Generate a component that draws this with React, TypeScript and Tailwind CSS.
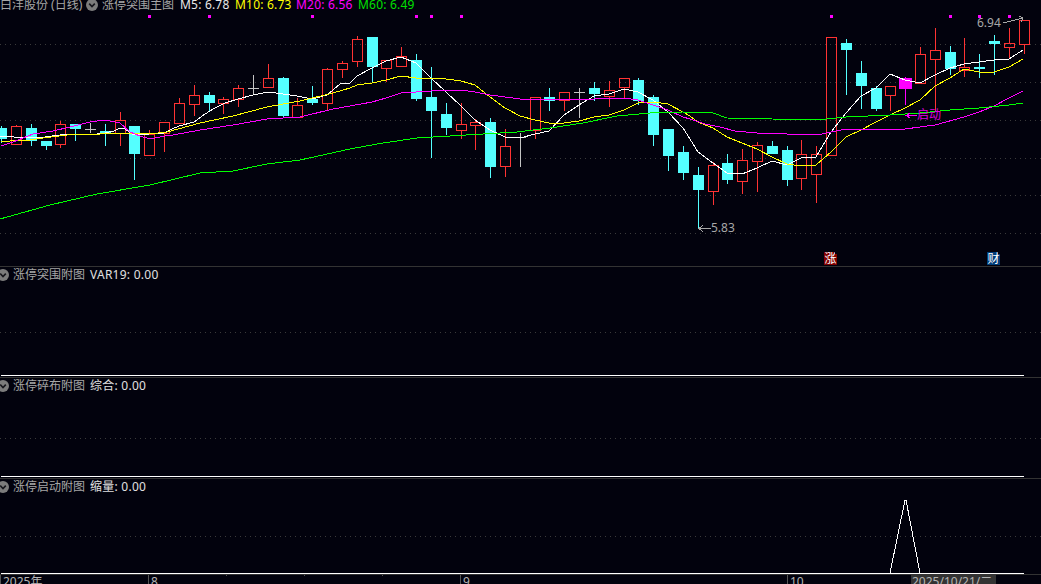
type Candle = [number, number, number, number, number, "c" | "r" | "g" | "m"];

// x, high, top, bottom, low, kind
const candles: Candle[] = [
  [1, 126, 128, 139, 143, "c"], [16, 125, 126, 144, 144, "r"], [31, 124, 128, 141, 146, "c"],
  [46, 141, 141, 146, 150, "c"], [60, 121, 124, 144, 148, "r"], [75, 124, 124, 129, 141, "c"],
  [90, 123, 129, 129, 133, "g"], [105, 124, 131, 133, 146, "c"], [120, 112, 120, 133, 146, "r"],
  [134, 126, 126, 154, 180, "c"], [149, 130, 134, 155, 156, "r"], [164, 122, 122, 133, 152, "r"],
  [179, 98, 103, 123, 124, "r"], [194, 85, 95, 104, 116, "r"], [209, 92, 95, 103, 112, "c"],
  [223, 97, 99, 103, 114, "r"], [238, 85, 88, 99, 107, "r"], [253, 75, 88, 88, 94, "g"],
  [268, 64, 78, 87, 88, "r"], [283, 77, 78, 116, 117, "c"], [297, 98, 105, 117, 117, "r"],
  [312, 86, 99, 103, 105, "c"], [327, 68, 69, 103, 111, "r"], [342, 61, 63, 69, 78, "r"],
  [357, 36, 39, 61, 67, "r"], [372, 37, 37, 67, 82, "c"], [386, 60, 60, 68, 82, "r"],
  [401, 47, 56, 66, 67, "r"], [416, 54, 60, 99, 101, "c"], [431, 67, 97, 111, 158, "c"],
  [446, 103, 114, 128, 135, "c"], [461, 103, 124, 130, 139, "r"], [475, 119, 122, 125, 150, "r"],
  [490, 118, 122, 167, 178, "c"], [505, 129, 146, 166, 177, "r"], [520, 133, 137, 137, 167, "g"],
  [535, 97, 97, 130, 139, "r"], [549, 88, 97, 101, 111, "c"], [564, 92, 92, 100, 111, "r"],
  [579, 88, 92, 92, 118, "g"], [594, 82, 88, 94, 101, "c"], [609, 81, 90, 96, 107, "r"],
  [624, 78, 78, 87, 98, "r"], [638, 78, 80, 101, 105, "c"], [653, 95, 97, 135, 146, "c"],
  [668, 129, 129, 156, 171, "c"], [683, 146, 152, 173, 180, "c"], [698, 167, 175, 190, 228, "c"],
  [713, 162, 165, 191, 205, "r"], [727, 154, 163, 180, 184, "c"], [742, 149, 160, 181, 194, "r"],
  [757, 142, 145, 161, 192, "r"], [772, 141, 146, 154, 154, "c"], [787, 146, 150, 180, 186, "c"],
  [801, 140, 154, 178, 190, "r"], [816, 146, 154, 174, 203, "r"], [831, 37, 37, 155, 155, "r"],
  [846, 39, 43, 50, 95, "c"], [861, 61, 73, 86, 109, "c"], [876, 86, 88, 109, 111, "c"],
  [890, 86, 86, 95, 111, "r"], [905, 77, 78, 89, 105, "m"], [920, 47, 54, 83, 83, "r"],
  [935, 28, 50, 59, 112, "r"], [950, 46, 52, 69, 75, "c"], [964, 38, 67, 70, 77, "r"],
  [979, 54, 67, 69, 78, "c"], [994, 35, 41, 44, 75, "c"], [1009, 28, 43, 47, 58, "r"],
  [1024, 20, 20, 44, 54, "r"],
];

const ma5 =
  "0,136 12,136 16,138 30,137 45,137 60,135 75,134 90,135 105,133 114,131 120,128 125,129 134,135 149,134 164,133 172,129 179,126 194,122 205,114 215,108 225,103 238,99 253,95 268,92 283,94 297,96 312,99 327,95 340,84 350,83 357,76 372,68 386,61 401,57 416,63 431,78 446,92 461,106 475,120 490,130 505,137 520,138 535,134 549,131 564,115 579,105 594,96 609,94 624,89 638,92 653,100 668,112 683,128 690,139 698,152 713,163 727,173 742,174 757,168 772,161 787,165 801,158 816,157 831,132 846,113 861,96 876,88 890,74 905,80 920,83 935,75 950,68 964,64 979,62 994,60 1009,59 1023,50";
const ma10 =
  "1,142 10,141 30,140 43,138 67,135 83,134 100,134 127,133 150,134 167,132 200,123 233,116 267,107 300,101 333,93 350,88 357,85 372,83 386,80 401,76 416,78 431,78 446,79 461,81 475,85 490,97 505,108 520,116 535,120 549,123 564,123 579,121 594,117 609,115 624,110 638,103 653,102 668,104 683,112 690,116 698,122 713,128 727,137 742,143 757,149 772,157 787,164 801,166 816,165 831,152 846,137 861,130 876,122 890,115 905,108 920,100 935,86 950,78 964,69 979,72 994,72 1009,67 1023,59";
const ma20 =
  "1,146 13,142 33,134 53,131 70,127 90,122 105,120 120,123 130,132 140,136 150,139 165,136 173,135 200,130 233,125 267,119 300,117 333,109 350,106 372,102 386,98 401,93 416,92 431,91 446,90 461,90 475,92 490,95 505,97 520,99 535,99 564,100 594,99 624,98 638,100 653,105 668,110 683,117 690,119 705,124 720,127 735,131 757,133 787,134 817,135 831,132 846,129 876,129 905,129 935,125 964,117 979,112 994,106 1009,98 1023,91";
const ma60 =
  "0,219 50,205 97,194 150,185 200,173 233,171 267,164 300,160 350,149 383,143 417,138 450,136 483,134 517,132 550,128 583,123 617,116 650,113 683,112 713,113 727,118 772,119 816,120 846,117 890,115 920,113 950,110 979,108 1009,105 1023,103";

const gridY = [44, 82, 120, 158, 195, 233];
const markers = [148, 208, 311, 415, 430, 460, 830, 949, 978, 1008];
const axisMajor = [
  { x: 0, label: "2025年" },
  { x: 148, label: "8" },
  { x: 460, label: "9" },
  { x: 787, label: "10" },
];
const axisMinor = [226, 304, 382];

const font = "font-['Noto_Sans','Noto_Sans_CJK_SC',sans-serif]";

const Chevron = ({ className }: { className: string }) => (
  <svg viewBox="0 0 12 12" className={className}>
    <circle cx="6" cy="6" r="6" fill="#7c7c7c" />
    <path d="M3.2 4.6 6 7.6 8.8 4.6" fill="none" stroke="#16161c" strokeWidth="1.6" />
  </svg>
);

const CandleMark = ({ c }: { c: Candle }) => {
  const [x, high, top, bottom, low, kind] = c;
  const cx = x + 0.5;
  if (kind === "g") {
    return (
      <g stroke="#c4c4c4">
        <line x1={cx} x2={cx} y1={high} y2={low} />
        <line x1={x - 5} x2={x + 6} y1={top + 0.5} y2={top + 0.5} />
      </g>
    );
  }
  if (kind === "r") {
    return (
      <g stroke="#ff3333" fill="none">
        <line x1={cx} x2={cx} y1={high} y2={top} />
        <line x1={cx} x2={cx} y1={bottom} y2={low} />
        <rect x={x - 5 + 0.5} y={top + 0.5} width={10} height={bottom - top} />
      </g>
    );
  }
  const color = kind === "m" ? "#ff00ff" : "#54ffff";
  const half = kind === "m" ? 6 : 5;
  return (
    <g>
      <line x1={cx} x2={cx} y1={high} y2={low} stroke={color} />
      <rect x={x - half} y={top} width={half * 2 + 1} height={bottom - top} fill={color} />
    </g>
  );
};

const MainChart = () => (
  <svg width="1041" height="266" shapeRendering="crispEdges" className="absolute left-0 top-0">
    {gridY.map((y) => (
      <line key={y} x1="0" x2="1041" y1={y + 0.5} y2={y + 0.5} stroke="#3a3a3a" strokeDasharray="1 4" />
    ))}
    {markers.map((x) => (
      <rect key={x} x={x} y="15" width="3" height="3" fill="#ff00ff" />
    ))}
    {candles.map((c) => (
      <CandleMark key={c[0]} c={c} />
    ))}
    <polyline points={ma5} fill="none" stroke="#ffffff" />
    <polyline points={ma10} fill="none" stroke="#ffff00" />
    <polyline points={ma20} fill="none" stroke="#ff00ff" />
    <polyline points={ma60} fill="none" stroke="#00ff00" />
    <polyline points="1003,23 1015,20 1023,18" fill="none" stroke="#a8a8a8" />
    <path d="M1019 16 1023 18 1021 22" fill="none" stroke="#a8a8a8" />
    <path d="M711 228.5H699M703 225 699 228.5 703 232" fill="none" stroke="#a8a8a8" />
    <path d="M917 115.5H906M910 113 906 115.5 910 118" fill="none" stroke="#ff00ff" />
  </svg>
);

const Badge = ({ label, className }: { label: string; className: string }) => (
  <span
    className={`absolute top-[252px] flex h-[13px] w-[13px] items-center justify-center text-xs leading-none text-white ${className}`}
  >
    {label}
    <span className="absolute right-0 top-0 h-[2px] w-[2px] bg-[#02020d]" />
  </span>
);

const SubPanel = ({
  title,
  name,
  value,
  height,
  grid,
  spike,
}: {
  title: string;
  name: string;
  value: string;
  height: string;
  grid: number;
  spike?: boolean;
}) => (
  <section className={`relative flex flex-col border-b border-[#333333] ${height}`}>
    <svg width="1041" height="94" shapeRendering="crispEdges" className="absolute left-0 top-0">
      <line x1="0" x2="1041" y1={grid + 0.5} y2={grid + 0.5} stroke="#3a3a3a" strokeDasharray="1 4" />
      {spike && <polyline points="890,94 905,21 906,21 920,94" fill="none" stroke="#ffffff" />}
    </svg>
    <div className="relative flex h-[15px] items-center text-xs leading-[15px]">
      <Chevron className="-ml-[3px] h-3 w-3 shrink-0" />
      <span className="ml-[4px] w-[72px] whitespace-nowrap text-[#a6a6a6]">{title}</span>
      <span className="ml-[5px] whitespace-nowrap tracking-[0.25px] text-[#e0e0e0]">
        {name}: {value}
      </span>
    </div>
    <div className="flex-1" />
    <div className="ml-px h-px w-[1023px] bg-white" />
  </section>
);

export default function App() {
  return (
    <div className={`flex h-[584px] w-[1041px] flex-col overflow-hidden bg-[#02020d] ${font}`}>
      <section className="relative h-[267px] shrink-0 border-b border-[#333333]">
        <MainChart />
        <div className="relative -mt-[3px] flex h-[16px] items-center whitespace-nowrap text-xs leading-[16px]">
          <span className="w-[86px] text-[#a6a6a6]">白洋股份 (日线)</span>
          <Chevron className="h-3 w-3 shrink-0" />
          <span className="ml-[4px] w-[78px] text-[#a6a6a6]">涨停突围主图</span>
          <span className="w-[55px] tracking-[0.2px] text-[#e8e8e8]">M5: 6.78</span>
          <span className="w-[61px] tracking-[0.2px] text-[#ffff00]">M10: 6.73</span>
          <span className="w-[62px] tracking-[0.2px] text-[#ff00ff]">M20: 6.56</span>
          <span className="tracking-[0.2px] text-[#00e000]">M60: 6.49</span>
        </div>
        <span className="absolute left-[977px] top-[15px] text-xs leading-4 text-[#a8a8a8]">6.94</span>
        <span className="absolute left-[711px] top-[220px] text-xs leading-4 text-[#a8a8a8]">5.83</span>
        <span className="absolute left-[917px] top-[107px] text-xs leading-4 text-[#e000e0]">启动</span>
        <Badge label="涨" className="left-[824px] bg-[#800000]" />
        <Badge label="财" className="left-[987px] bg-[#003c78]" />
      </section>
      <SubPanel title="涨停突围附图" name="VAR19" value="0.00" height="h-[111px] shrink-0 pb-px" grid={65} />
      <SubPanel title="涨停碎布附图" name="综合" value="0.00" height="h-[101px] shrink-0 pb-px" grid={60} />
      <SubPanel title="涨停启动附图" name="缩量" value="0.00" height="h-[96px] shrink-0" grid={57} spike />
      <div className="relative h-[9px] overflow-hidden text-xs leading-[14px] text-[#b4b4b4]">
        {axisMajor.map((a) => (
          <div key={a.x} style={{ left: a.x }} className="absolute top-0 h-[9px] border-l border-[#555555] pl-[2px]">
            {a.label}
          </div>
        ))}
        {axisMinor.map((x) => (
          <div key={x} style={{ left: x }} className="absolute top-0 h-px w-px bg-[#555555]" />
        ))}
        <div className="absolute left-[911px] top-0 h-[9px] w-[85px] bg-[#333333] pl-px">2025/10/21/二</div>
      </div>
    </div>
  );
}
